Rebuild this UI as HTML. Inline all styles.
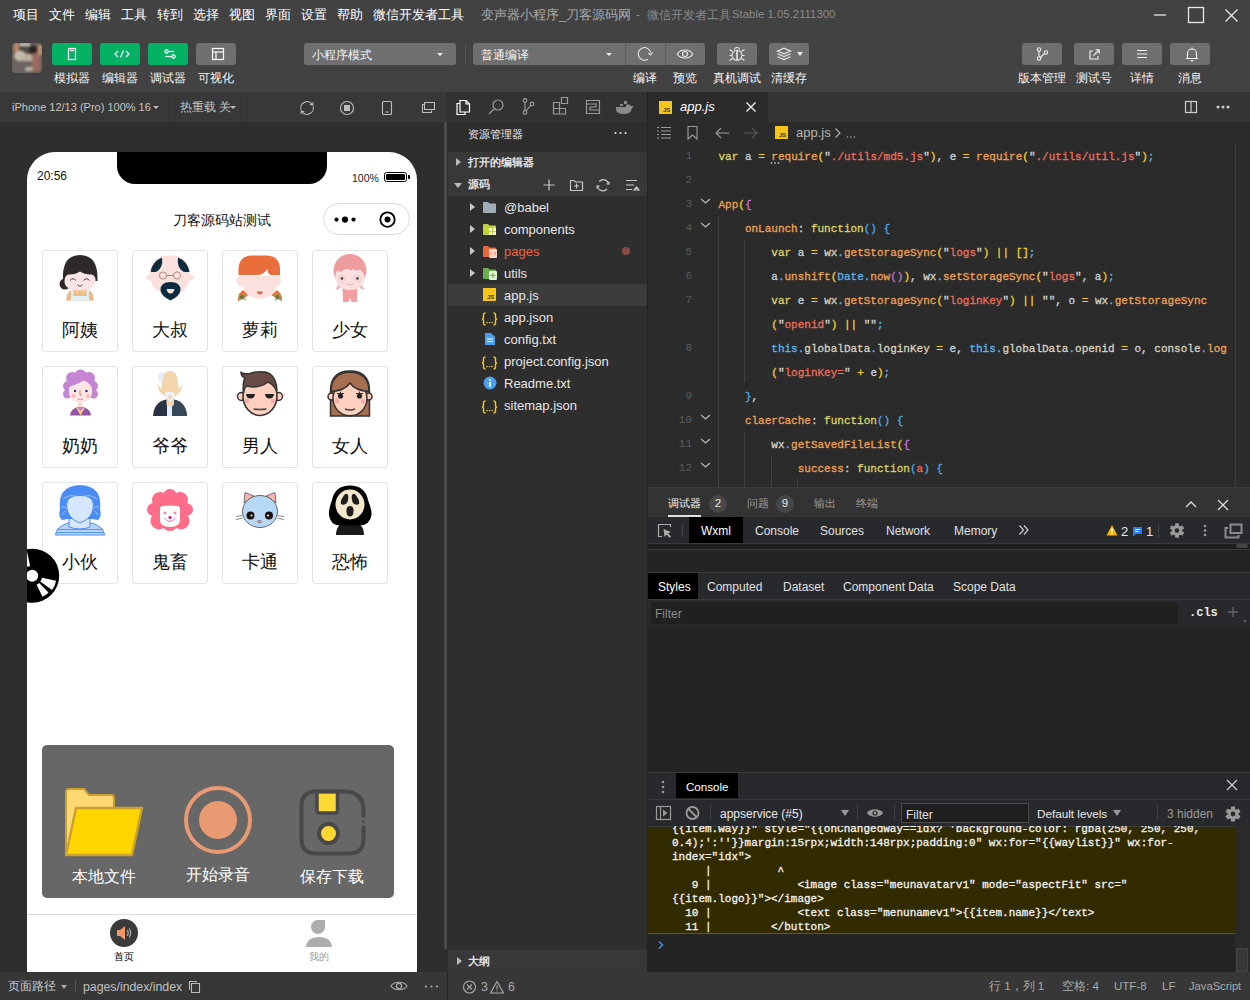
<!DOCTYPE html>
<html><head><meta charset="utf-8">
<style>
*{margin:0;padding:0;box-sizing:border-box}
html,body{width:1250px;height:1000px;overflow:hidden;background:#2e2e2e;font-family:"Liberation Sans",sans-serif;color:#ddd}
.a{position:absolute}
.t{position:absolute;white-space:nowrap;line-height:1}
.m{-webkit-text-stroke:0.3px currentColor}
</style></head><body>
<div class="a" style="left:0;top:0;width:1250px;height:1000px;overflow:hidden">

<!-- ===== top menu + toolbar ===== -->
<div class="a" id="top" style="left:0;top:0;width:1250px;height:92px;background:#424242">
  <div class="t" style="left:13px;top:8px;font-size:13px;color:#fff;font-weight:500">
    <span style="position:absolute;left:0">项目</span><span style="position:absolute;left:36px">文件</span><span style="position:absolute;left:72px">编辑</span><span style="position:absolute;left:108px">工具</span><span style="position:absolute;left:144px">转到</span><span style="position:absolute;left:180px">选择</span><span style="position:absolute;left:216px">视图</span><span style="position:absolute;left:252px">界面</span><span style="position:absolute;left:288px">设置</span><span style="position:absolute;left:324px">帮助</span><span style="position:absolute;left:360px">微信开发者工具</span>
  </div>
  <div class="t" style="left:481px;top:8px;font-size:13px;color:#a8a8a8">变声器小程序_刀客源码网</div><div class="t" style="left:636px;top:9px;font-size:12px;color:#8a8a8a">-&nbsp;&nbsp;微信开发者工具</div><div class="t" style="left:732px;top:9px;font-size:11.4px;color:#8a8a8a">Stable 1.05.2111300</div>

  <!-- avatar -->
  <svg class="a" style="left:12px;top:43px;border-radius:3px" width="30" height="30" viewBox="0 0 30 30">
    <defs><filter id="bl" x="-20%" y="-20%" width="140%" height="140%"><feGaussianBlur stdDeviation="1.3"/></filter><clipPath id="avc"><rect x="0" y="0" width="30" height="30" rx="3"/></clipPath></defs>
    <g clip-path="url(#avc)"><rect x="0" y="0" width="30" height="30" fill="#6a605a"/>
    <g filter="url(#bl)">
      <rect x="2" y="0" width="6" height="9" fill="#b88466"/>
      <rect x="7" y="1" width="14" height="10" fill="#4e4844"/>
      <rect x="8" y="0" width="10" height="3" fill="#c8c0b8"/>
      <rect x="17" y="3" width="8" height="10" fill="#2c2424"/>
      <ellipse cx="8" cy="13" rx="6" ry="5" fill="#c4bcac"/>
      <ellipse cx="16" cy="15" rx="7" ry="4" fill="#bcb2a2"/>
      <rect x="20" y="10" width="8" height="18" rx="3" fill="#9c6a5c"/>
      <rect x="0" y="18" width="20" height="12" fill="#6c6464"/>
      <ellipse cx="17" cy="26" rx="4" ry="2" fill="#b8b0a0"/>
      <rect x="26" y="2" width="4" height="10" fill="#c09070"/>
    </g></g>
  </svg>
  <!-- green buttons -->
  <div class="a" style="left:52px;top:43px;width:40px;height:22px;border-radius:3px;background:#05b164"></div>
  <div class="a" style="left:100px;top:43px;width:40px;height:22px;border-radius:3px;background:#05b164"></div>
  <div class="a" style="left:148px;top:43px;width:40px;height:22px;border-radius:3px;background:#05b164"></div>
  <div class="a" style="left:196px;top:43px;width:40px;height:22px;border-radius:3px;background:#707070"></div>
  <svg class="a" style="left:52px;top:43px" width="192" height="22" viewBox="0 0 192 22" fill="none" stroke="#fff" stroke-width="1.2">
    <rect x="16.5" y="5.5" width="7" height="11" />
    <line x1="18" y1="7.5" x2="22" y2="7.5"/>
    <path d="M66 8 L63 11 L66 14 M74 8 L77 11 L74 14 M71.5 7.5 L68.5 14.5"/>
    <circle cx="114.5" cy="8.5" r="1.6"/><line x1="116" y1="8.5" x2="122" y2="8.5"/>
    <circle cx="121.5" cy="13.5" r="1.6"/><line x1="113" y1="13.5" x2="120" y2="13.5"/>
    <rect x="160.5" y="5.5" width="11" height="11"/><line x1="160.5" y1="9" x2="171.5" y2="9"/><line x1="164" y1="9" x2="164" y2="16.5"/>
  </svg>
  <div class="t" style="left:54px;top:72px;font-size:12px;color:#f4f4f4;font-weight:500">模拟器</div>
  <div class="t" style="left:102px;top:72px;font-size:12px;color:#f4f4f4;font-weight:500">编辑器</div>
  <div class="t" style="left:150px;top:72px;font-size:12px;color:#f4f4f4;font-weight:500">调试器</div>
  <div class="t" style="left:198px;top:72px;font-size:12px;color:#f4f4f4;font-weight:500">可视化</div>
  <!-- dropdowns -->
  <div class="a" style="left:304px;top:43px;width:152px;height:22px;border-radius:3px;background:#6f6f6f"></div>
  <div class="t" style="left:312px;top:49px;font-size:12px;color:#f4f4f4;font-weight:500">小程序模式</div>
  <div class="a" style="left:437px;top:53px;width:0;height:0;border-left:3px solid transparent;border-right:3px solid transparent;border-top:3px solid #eee"></div>
  <div class="a" style="left:465px;top:43px;width:1px;height:22px;background:#555"></div>
  <div class="a" style="left:473px;top:43px;width:232px;height:22px;border-radius:3px;background:#6f6f6f"></div>
  <div class="a" style="left:625px;top:43px;width:1px;height:22px;background:#5a5a5a"></div>
  <div class="a" style="left:665px;top:43px;width:1px;height:22px;background:#5a5a5a"></div>
  <div class="t" style="left:481px;top:49px;font-size:12px;color:#f4f4f4;font-weight:500">普通编译</div>
  <div class="a" style="left:606px;top:53px;width:0;height:0;border-left:3px solid transparent;border-right:3px solid transparent;border-top:3px solid #eee"></div>
  <div class="a" style="left:717px;top:43px;width:40px;height:22px;border-radius:3px;background:#6f6f6f"></div>
  <div class="a" style="left:769px;top:43px;width:40px;height:22px;border-radius:3px;background:#6f6f6f"></div>
  <svg class="a" style="left:625px;top:43px" width="190" height="22" viewBox="0 0 190 22" fill="none" stroke="#e8e8e8" stroke-width="1.1">
    <path d="M25.6 9.5 A6.3 6.3 0 1 0 22.8 16.2"/><path d="M23.3 10 L25.7 12 L27.6 9.2"/>
    <path d="M52.2 11 C55.5 5.6 64.5 5.6 67.8 11 C64.5 16.4 55.5 16.4 52.2 11 Z"/><circle cx="60" cy="11" r="2.5"/>
    <path d="M109.5 6.5 A2.5 2 0 0 1 114.5 6.5"/><circle cx="112" cy="12.3" r="5"/><path d="M112 7.5 V17" stroke-width="1.6"/>
    <path d="M104.5 6.5 L107.5 8.5 M104.5 12.5 H107 M104.5 17.5 L107.5 15.5 M119.5 6.5 L116.5 8.5 M119.5 12.5 H117 M119.5 17.5 L116.5 15.5"/>
    <path d="M152.5 8 L159 5.2 L165.5 8 L159 10.8 Z" stroke-width="1.2"/><path d="M152.5 10.8 L159 13.6 L165.5 10.8 M152.5 13.8 L159 16.6 L165.5 13.8" stroke-width="1.2"/>
  </svg>
  <div class="a" style="left:797px;top:52px;width:0;height:0;border-left:3.5px solid transparent;border-right:3.5px solid transparent;border-top:4px solid #eee"></div>
  <div class="t" style="left:633px;top:72px;font-size:12px;color:#f4f4f4;font-weight:500">编译</div>
  <div class="t" style="left:673px;top:72px;font-size:12px;color:#f4f4f4;font-weight:500">预览</div>
  <div class="t" style="left:713px;top:72px;font-size:12px;color:#f4f4f4;font-weight:500">真机调试</div>
  <div class="t" style="left:771px;top:72px;font-size:12px;color:#f4f4f4;font-weight:500">清缓存</div>
  <!-- right buttons -->
  <div class="a" style="left:1022px;top:43px;width:40px;height:22px;border-radius:3px;background:#6f6f6f"></div>
  <div class="a" style="left:1074px;top:43px;width:40px;height:22px;border-radius:3px;background:#6f6f6f"></div>
  <div class="a" style="left:1122px;top:43px;width:40px;height:22px;border-radius:3px;background:#6f6f6f"></div>
  <div class="a" style="left:1170px;top:43px;width:40px;height:22px;border-radius:3px;background:#6f6f6f"></div>
  <svg class="a" style="left:1022px;top:43px" width="190" height="22" viewBox="0 0 190 22" fill="none" stroke="#f0f0f0" stroke-width="1.1">
    <circle cx="17" cy="6.5" r="1.7"/><circle cx="17" cy="15.5" r="1.7"/><circle cx="24" cy="9.5" r="1.7"/><path d="M17 8.2 V13.8 M18.5 14.5 L22.5 10.5"/>
    <path d="M71 8 H68 V16 H76 V13 M71.5 12.5 L77 7 M73.5 6.8 H77.2 V10.5"/>
    <path d="M115 7.5 H125 M115 11 H125 M115 14.5 H125"/>
    <path d="M164 15.5 H176 M165.5 15.5 V10.5 A4.5 4.5 0 0 1 174.5 10.5 V15.5 M170 4.5 V6 M169 17 a1 1 0 0 0 2 0"/>
  </svg>
  <div class="t" style="left:1018px;top:72px;font-size:12px;color:#f4f4f4;font-weight:500">版本管理</div>
  <div class="t" style="left:1076px;top:72px;font-size:12px;color:#f4f4f4;font-weight:500">测试号</div>
  <div class="t" style="left:1130px;top:72px;font-size:12px;color:#f4f4f4;font-weight:500">详情</div>
  <div class="t" style="left:1178px;top:72px;font-size:12px;color:#f4f4f4;font-weight:500">消息</div>
  <!-- window controls -->
  <svg class="a" style="left:1140px;top:0" width="110" height="30" viewBox="0 0 110 30" fill="none" stroke="#e8e8e8" stroke-width="1.3">
    <line x1="14" y1="15" x2="26" y2="15"/>
    <rect x="48.5" y="7.5" width="15" height="15"/>
    <path d="M85.5 9.5 L97.5 21.5 M97.5 9.5 L85.5 21.5"/>
  </svg>
</div>

<!-- ===== simulator panel ===== -->
<div class="a" id="sim" style="left:0;top:92px;width:447px;height:880px;background:#2e2e2e">

  <div class="a" style="left:0;top:0;width:447px;height:30px;background:#383838"></div>
  <div class="t" style="left:12px;top:10px;font-size:11px;color:#c8c4bc">iPhone 12/13 (Pro) 100% 16</div>
  <div class="a" style="left:153px;top:14px;width:0;height:0;border-left:3px solid transparent;border-right:3px solid transparent;border-top:3px solid #bbb"></div>
  <div class="a" style="left:168px;top:0;width:1px;height:30px;background:#333"></div>
  <div class="t" style="left:180px;top:10px;font-size:11.5px;color:#c4c4c4">热重载 关</div>
  <div class="a" style="left:230px;top:14px;width:0;height:0;border-left:3px solid transparent;border-right:3px solid transparent;border-top:3px solid #bbb"></div>
  <div class="a" style="left:247px;top:0;width:1px;height:30px;background:#333"></div>
  <svg class="a" style="left:290px;top:0" width="157" height="30" viewBox="0 0 157 30" fill="none" stroke="#bdbdbd" stroke-width="1.1">
    <path d="M23.09 14.37 A6.3 6.3 0 0 1 11.54 19.15 M10.91 17.63 A6.3 6.3 0 0 1 22.46 12.85"/><path d="M19.86 12.25 L22.76 13.15 L23.06 10.25 M14.14 19.75 L11.24 18.85 L10.94 21.75"/>
    <circle cx="57" cy="16" r="6.5"/><rect x="54" y="13" width="6" height="6" fill="#bdbdbd" stroke="none"/>
    <rect x="92.5" y="9.5" width="9" height="13" rx="1"/><line x1="95.5" y1="20" x2="98.5" y2="20"/>
    <path d="M134.5 12.5 H132.5 V20.5 H141.5 V18.5 M134.5 10.5 H144.5 V17.5 H134.5 Z"/>
  </svg>
  <!-- scrollbar -->
  <div class="a" style="left:444px;top:30px;width:3px;height:827px;background:#4a4a4a"></div>
</div>


<!-- ===== phone ===== -->
<div class="a" id="phone" style="left:27px;top:152px;width:390px;height:820px;background:#fff;border-radius:28px 28px 0 0;overflow:hidden">
  <div class="a" style="left:90px;top:0;width:210px;height:32px;background:#000;border-radius:0 0 18px 18px"></div>
  <div class="t" style="left:10px;top:18px;font-size:12px;color:#111">20:56</div>
  <div class="t" style="left:325px;top:21px;font-size:10.5px;color:#222">100%</div>
  <div class="a" style="left:357px;top:20px;width:23px;height:10px;border:1.3px solid #000;border-radius:2.5px;padding:1.3px"><div style="width:100%;height:100%;background:#000;border-radius:1px"></div></div>
  <div class="a" style="left:381px;top:23px;width:2px;height:4px;background:#000;border-radius:0 1px 1px 0"></div>
  <div class="t" style="left:0;top:62px;width:390px;text-align:center;font-size:13.5px;color:#111">刀客源码站测试</div>
  <div class="a" style="left:296px;top:51px;width:87px;height:32px;border:1px solid #dcdcdc;border-radius:16px"></div>
  <svg class="a" style="left:296px;top:51px" width="87" height="32" viewBox="0 0 87 32">
    <circle cx="13.5" cy="16.6" r="2.1" fill="#000"/><circle cx="22" cy="16.6" r="3.1" fill="#000"/><circle cx="30.5" cy="16.6" r="2.1" fill="#000"/>
    <circle cx="64.5" cy="16.6" r="7.2" fill="none" stroke="#000" stroke-width="1.8"/><circle cx="64.5" cy="16.6" r="3" fill="#000"/>
  </svg>
<div class="a" style="left:15px;top:98px;width:76px;height:102px;border:1px solid #e3e3e3;border-radius:3px;background:#fff"></div>
<svg class="a" style="left:28px;top:101px;overflow:visible" width="50" height="50" viewBox="0 0 50 50"><path d="M8 28 Q6.5 2 25 2 Q43.5 2 42.5 28 Z" fill="#2e2a2b"/><circle cx="10" cy="31" r="5.5" fill="#2e2a2b"/>
<path d="M11 47.5 Q12 37 18 36.5 H32 Q38 37 39 47.5Z" fill="#f0b98a"/><path d="M16 47.5 V37 H18.5 V43 H31.5 V37 H34 V47.5Z" fill="#dff0f5"/><path d="M19 38 L22 41 L25 38 L28 41 L31 38Z" fill="#f3d080"/>
<path d="M9.5 28.5 Q9.5 23 13 21.5 Q20 22 25 18.5 Q30 22 37 21.5 Q41 23 40.5 28.5 Q40 37.5 25 37.5 Q10 37.5 9.5 28.5Z" fill="#fae4e6"/>
<path d="M15 27.5 Q18 24 21 27.5 M28.5 27.5 Q31.5 24 34.5 27.5 M22.5 31.5 Q25 35 27.5 31.5" stroke="#333" stroke-width="0.9" fill="none"/></svg>
<div class="t" style="left:15px;top:169px;width:76px;text-align:center;font-size:18px;color:#111">阿姨</div>
<div class="a" style="left:105px;top:98px;width:76px;height:102px;border:1px solid #e3e3e3;border-radius:3px;background:#fff"></div>
<svg class="a" style="left:118px;top:101px;overflow:visible" width="50" height="50" viewBox="0 0 50 50"><path d="M5 22 Q5 2.5 25 2.5 Q45 2.5 45 22 Q45 32 38 38 L25.5 46 L13 38 Q5 32 5 22Z" fill="#fbe1dd"/><ellipse cx="25" cy="24.5" rx="24.5" ry="5.5" fill="#fbe1dd"/>
<path d="M5.5 18.5 Q8 8 17 4.5 Q18.5 14 12 18.5 Q8 19.5 5.5 18.5Z" fill="#0d2b3e"/><path d="M44.5 18.5 Q42 8 33 4.5 Q31.5 14 38 18.5 Q42 19.5 44.5 18.5Z" fill="#0d2b3e"/>
<circle cx="18" cy="22.5" r="3.6" fill="none" stroke="#8a6a5a" stroke-width=".7"/><circle cx="32" cy="22.5" r="3.6" fill="none" stroke="#8a6a5a" stroke-width=".7"/><path d="M21.6 22.5 H28.4" stroke="#8a6a5a" stroke-width=".8"/>
<path d="M15.5 37 Q15.5 29 25.5 29 Q35.5 29 35.5 37 Q35 43 25.5 47.5 Q16 43 15.5 37Z" fill="#0d2b3e"/><path d="M21.5 36 H29.5 Q28.5 40.5 25.5 40.5 Q22.5 40.5 21.5 36Z" fill="#fbe1dd"/></svg>
<div class="t" style="left:105px;top:169px;width:76px;text-align:center;font-size:18px;color:#111">大叔</div>
<div class="a" style="left:195px;top:98px;width:76px;height:102px;border:1px solid #e3e3e3;border-radius:3px;background:#fff"></div>
<svg class="a" style="left:208px;top:101px;overflow:visible" width="50" height="50" viewBox="0 0 50 50"><path d="M8 37 Q2 42 3 48 Q9 46 13.5 42Z" fill="#e96e3c"/><path d="M42 37 Q48 42 47 48 Q41 46 36.5 42Z" fill="#e96e3c"/>
<path d="M3.5 41 l7 6 M10 40.5 l-6 6.5 M39.5 40.5 l7 6 M46 41 l-6 6.5" stroke="#94b060" stroke-width="1.6"/><circle cx="7" cy="44" r="2" fill="#5f7a38"/><circle cx="42.5" cy="44" r="2" fill="#5f7a38"/>
<path d="M1.5 28 Q1.5 23 7 23 H41 Q46 23 46 28 Q46 33 41 34 Q38 45.5 24.5 45.5 Q11 45.5 8 34 Q1.5 33 1.5 28Z" fill="#fbe1dd"/>
<path d="M3.5 22 V17 Q3.5 2.5 17 2.5 H31 Q45 2.5 45 17 V22 H35.5 Q32.5 20.5 32.5 16 Q29 21.5 23 22Z" fill="#e96e3c"/><path d="M21.5 38.5 H28 Q27 41.5 24.8 41.5 Q22.5 41.5 21.5 38.5Z" fill="#e0604a"/></svg>
<div class="t" style="left:195px;top:169px;width:76px;text-align:center;font-size:18px;color:#111">萝莉</div>
<div class="a" style="left:285px;top:98px;width:76px;height:102px;border:1px solid #e3e3e3;border-radius:3px;background:#fff"></div>
<svg class="a" style="left:298px;top:101px;overflow:visible" width="50" height="50" viewBox="0 0 50 50"><path d="M17.5 35 H32.5 L32 49 H26.5 L25 45 L23.5 49 H18Z" fill="#f0a0a2"/><path d="M10.5 36.5 L14 30 L16.5 35Z M39.5 36.5 L36 30 L33.5 35Z" fill="#f3b4b6"/>
<circle cx="25" cy="17.5" r="16.5" fill="#ee9c9e"/>
<path d="M10.5 22 Q11 16 16 19 Q20 14 27 17.5 L27.5 15.5 Q33 19 35 16 Q38 19 39.5 22 Q40 37 25 37 Q10 37 10.5 22Z" fill="#fbdfe0"/>
<circle cx="17" cy="25.5" r="3.4" fill="none" stroke="#f4b8b8" stroke-width=".7"/><circle cx="32.5" cy="25.5" r="3.4" fill="none" stroke="#f4b8b8" stroke-width=".7"/>
<circle cx="17" cy="25.5" r="1.4" fill="#555"/><circle cx="32.5" cy="25.5" r="1.4" fill="#555"/><path d="M21.5 31 q3.5 2 7 0" stroke="#e49a9a" stroke-width=".7" fill="none"/></svg>
<div class="t" style="left:285px;top:169px;width:76px;text-align:center;font-size:18px;color:#111">少女</div>
<div class="a" style="left:15px;top:214px;width:76px;height:102px;border:1px solid #e3e3e3;border-radius:3px;background:#fff"></div>
<svg class="a" style="left:28px;top:217px;overflow:visible" width="50" height="50" viewBox="0 0 50 50"><path d="M15 46.5 Q16 38 25.5 38 Q35 38 36 46.5Z" fill="#8e55a8"/><path d="M21 38.5 L25.5 46.5 L30 38.5Z" fill="#f5d070"/><path d="M21.5 38 L25.5 42 L29.5 38Z" fill="#c685d2"/>
<rect x="23" y="32" width="4.5" height="6" fill="#fcd8d0"/>
<circle cx="17" cy="9" r="6" fill="#c685d2"/><circle cx="25.5" cy="7" r="6.5" fill="#c685d2"/><circle cx="34" cy="9" r="6" fill="#c685d2"/><circle cx="13" cy="17" r="5" fill="#c685d2"/><circle cx="38" cy="17" r="5" fill="#c685d2"/><circle cx="12.5" cy="25" r="4.5" fill="#c685d2"/><circle cx="38.5" cy="25" r="4.5" fill="#c685d2"/>
<path d="M14 20 Q14 15 20 13.5 L29 11.5 Q37 14 37 20 Q38 33 25.5 34 Q13 33 14 20Z" fill="#fde6e3"/><path d="M14 18 Q20 16 29 11.5 Q24 6 15 12Z" fill="#c685d2"/><path d="M29 11.5 Q34 13 38 20 L38 12 Q34 7 29 11.5Z" fill="#c685d2"/>
<circle cx="20" cy="22" r="1.2" fill="#2a2a70"/><circle cx="31.5" cy="22" r="1.2" fill="#2a2a70"/><circle cx="18.5" cy="27" r="2" fill="#f8b8c0"/><circle cx="33" cy="27" r="2" fill="#f8b8c0"/><path d="M25 21 V26 H26.5 M23 30 q2.5 1.2 5 0" stroke="#e06070" stroke-width=".8" fill="none"/></svg>
<div class="t" style="left:15px;top:285px;width:76px;text-align:center;font-size:18px;color:#111">奶奶</div>
<div class="a" style="left:105px;top:214px;width:76px;height:102px;border:1px solid #e3e3e3;border-radius:3px;background:#fff"></div>
<svg class="a" style="left:118px;top:217px;overflow:visible" width="50" height="50" viewBox="0 0 50 50"><path d="M8 47 Q9 31 25 30 Q41 31 42 47Z" fill="#2a3345"/><path d="M25 30 Q41 31 42 47 H27Z" fill="#37475a"/><rect x="22" y="35" width="5" height="12" fill="#e4eefc"/>
<rect x="21.5" y="28" width="7.5" height="9" rx="2" fill="#f8d8b0"/>
<path d="M12 13 Q13 17 17 20 Q16 2 25 2 Q34 2 33 20 Q37 17 37.5 13 Q37 22 33 25 Q30 28 25 29 Q20 28 17 25 Q13 22 12 13Z" fill="#f4d4ac"/>
<path d="M13 5 Q17 2.5 20 3 Q17 8 16 15 Q13 12 13 5Z" fill="#e4eefc"/>
<path d="M20 24 Q25 21 29.5 24 Q30 30 25 32.5 Q20 30 20 24Z" fill="#eef2fa"/><path d="M22.5 27 Q25 25 27.5 27 L25 31Z" fill="#f4d4ac"/></svg>
<div class="t" style="left:105px;top:285px;width:76px;text-align:center;font-size:18px;color:#111">爷爷</div>
<div class="a" style="left:195px;top:214px;width:76px;height:102px;border:1px solid #e3e3e3;border-radius:3px;background:#fff"></div>
<svg class="a" style="left:208px;top:217px;overflow:visible" width="50" height="50" viewBox="0 0 50 50"><circle cx="6.5" cy="27.5" r="4" fill="#fdd0c0" stroke="#333" stroke-width="1.5"/><circle cx="43.5" cy="27.5" r="4" fill="#fdd0c0" stroke="#333" stroke-width="1.5"/>
<ellipse cx="25" cy="27" rx="17" ry="19.5" fill="#fdd0c0" stroke="#333" stroke-width="1.6"/>
<path d="M8.5 24 Q7.5 13 10 9 Q6 7 6 3.5 Q10 5.5 15 4.5 Q22 2 30 3 Q41 5 42 22 Q38 15 33 13 Q24 20 12 17 Q9 19 8.5 24Z" fill="#6a4a44" stroke="#333" stroke-width="1.5"/>
<path d="M11 25 H20 Q19.5 29.5 15.5 29.5 Q11.5 29.5 11 25Z M30 25 H39 Q38.5 29.5 34.5 29.5 Q30.5 29.5 30 25Z" fill="#222"/>
<path d="M18.5 40 Q25 41 31.5 40" stroke="#444" stroke-width="1.6" fill="none"/><circle cx="12" cy="32" r="2.2" fill="#fba8a8"/><circle cx="38" cy="32" r="2.2" fill="#fba8a8"/></svg>
<div class="t" style="left:195px;top:285px;width:76px;text-align:center;font-size:18px;color:#111">男人</div>
<div class="a" style="left:285px;top:214px;width:76px;height:102px;border:1px solid #e3e3e3;border-radius:3px;background:#fff"></div>
<svg class="a" style="left:298px;top:217px;overflow:visible" width="50" height="50" viewBox="0 0 50 50"><path d="M5.5 47 V22 Q5.5 2 25 2 Q44.5 2 44.5 22 V47Z" fill="#a86e50" stroke="#333" stroke-width="1.5"/>
<circle cx="6.5" cy="27.5" r="3.5" fill="#fdd0c0" stroke="#333" stroke-width="1.5"/><circle cx="43.5" cy="27.5" r="3.5" fill="#fdd0c0" stroke="#333" stroke-width="1.5"/>
<ellipse cx="25" cy="29.5" rx="17" ry="17.3" fill="#fdd0c0" stroke="#333" stroke-width="1.5"/>
<path d="M6 22.5 Q20 21.5 25 14 Q30 21.5 44 22.5 Q44 4 25 3 Q6 4 6 22.5Z" fill="#a86e50" stroke="#333" stroke-width="1.5"/>
<circle cx="15.5" cy="27" r="2.6" fill="#222"/><circle cx="34.5" cy="27" r="2.6" fill="#222"/><path d="M12 24.5 h7 M15.5 24.5 v-2 M31 24.5 h7 M34.5 24.5 v-2" stroke="#222" stroke-width=".9"/>
<path d="M20 40 Q25 42 30 40" stroke="#444" stroke-width="1.6" fill="none"/><circle cx="12" cy="32" r="2.2" fill="#fba8a8"/><circle cx="38" cy="32" r="2.2" fill="#fba8a8"/></svg>
<div class="t" style="left:285px;top:285px;width:76px;text-align:center;font-size:18px;color:#111">女人</div>
<div class="a" style="left:15px;top:330px;width:76px;height:102px;border:1px solid #e3e3e3;border-radius:3px;background:#fff"></div>
<svg class="a" style="left:28px;top:333px;overflow:visible" width="50" height="50" viewBox="0 0 50 50"><path d="M0.5 50 Q1 42 13 38 Q25 44 37 38 Q49 42 49.5 50Z" fill="#b8d4fb" stroke="#4a8ef5" stroke-width="1"/><path d="M2 44.5 H48 M1 47.5 H49" stroke="#4a8ef5" stroke-width=".9"/>
<path d="M14 32 V42 Q25 46 35 42 V32Z" fill="#d6e6fd" stroke="#4a8ef5" stroke-width="1"/>
<path d="M5 24 Q3 6 15 2 Q25 -2 35 2 Q47 6 45 24 Q47 32 43 35 L37 34 L13 34 L7 35 Q3 32 5 24Z" fill="#4a8ef5"/>
<path d="M8 14 Q15 8 25 12 Q35 8 42 14 M6 22 Q9 20 12 24 M44 22 Q41 20 38 24 M7 30 L10 26 M43 30 L40 26" stroke="#a8c8fa" stroke-width=".8" fill="none"/>
<path d="M11.5 20 Q12 10 25 10.5 Q38 10 38.5 20 Q38.5 33 25 38 Q11.5 33 11.5 20Z" fill="#d6e6fd" stroke="#4a8ef5" stroke-width="1"/></svg>
<div class="t" style="left:15px;top:401px;width:76px;text-align:center;font-size:18px;color:#111">小伙</div>
<div class="a" style="left:105px;top:330px;width:76px;height:102px;border:1px solid #e3e3e3;border-radius:3px;background:#fff"></div>
<svg class="a" style="left:118px;top:333px;overflow:visible" width="50" height="50" viewBox="0 0 50 50"><g fill="#fd6d8a"><circle cx="25" cy="11" r="7"/><circle cx="15" cy="15" r="8"/><circle cx="35" cy="15" r="8"/><circle cx="8.5" cy="24.5" r="6.5"/><circle cx="41.5" cy="24.5" r="6.5"/><circle cx="14" cy="36" r="8.5"/><circle cx="36" cy="36" r="8.5"/><circle cx="25" cy="27" r="16"/><circle cx="25" cy="38" r="8"/></g>
<path d="M15 24 Q15 21 18 21 Q25 20 32 21 Q35 21 35 24 V35 Q35 42 25 42 Q15 42 15 35Z" fill="#fff"/>
<path d="M20 26 L20.8 27.5 L22.3 28 L20.8 28.5 L20 30 L19.2 28.5 L17.7 28 L19.2 27.5Z M30 26 L30.8 27.5 L32.3 28 L30.8 28.5 L30 30 L29.2 28.5 L27.7 28 L29.2 27.5Z" fill="#fd6d8a"/>
<circle cx="25" cy="32.5" r="1.6" fill="#e0106a"/><path d="M19.5 33 Q25 40 30.5 33" stroke="#e070c0" stroke-width="1" fill="none"/></svg>
<div class="t" style="left:105px;top:401px;width:76px;text-align:center;font-size:18px;color:#111">鬼畜</div>
<div class="a" style="left:195px;top:330px;width:76px;height:102px;border:1px solid #e3e3e3;border-radius:3px;background:#fff"></div>
<svg class="a" style="left:208px;top:333px;overflow:visible" width="50" height="50" viewBox="0 0 50 50"><path d="M9 18 L10 7.5 L19 11Z M41 18 L40 7.5 L31 11Z" fill="#f7b3b0" stroke="#555" stroke-width=".8"/>
<ellipse cx="25" cy="26.5" rx="17.5" ry="16" fill="#b8d8f8" stroke="#555" stroke-width=".9"/>
<circle cx="15.5" cy="30.5" r="4" fill="#1a1010"/><circle cx="34" cy="30.5" r="4" fill="#1a1010"/><circle cx="16.5" cy="30.5" r="1" fill="#fff"/><circle cx="33" cy="30.5" r="1" fill="#fff"/>
<ellipse cx="24.5" cy="36.5" rx="2" ry="1.3" fill="#e88a98" stroke="#555" stroke-width=".5"/>
<path d="M1 31.5 L7.5 30.5 M1 34.5 L7.5 33 M49 31.5 L42.5 30.5 M49 34.5 L42.5 33" stroke="#666" stroke-width=".8"/></svg>
<div class="t" style="left:195px;top:401px;width:76px;text-align:center;font-size:18px;color:#111">卡通</div>
<div class="a" style="left:285px;top:330px;width:76px;height:102px;border:1px solid #e3e3e3;border-radius:3px;background:#fff"></div>
<svg class="a" style="left:298px;top:333px;overflow:visible" width="50" height="50" viewBox="0 0 50 50"><path d="M11 50 Q11 37 25 37 Q39 37 39 50Z" fill="#1a1a1a"/>
<path d="M25 0.5 Q40 0.5 43 15 Q47 25 46.5 30 Q45 40 35 40.5 H15 Q5 40 4 30 Q3.5 24 7 15 Q10 0.5 25 0.5Z" fill="#000"/>
<ellipse cx="25" cy="19.5" rx="14.5" ry="15" fill="#f4e8cc"/>
<path d="M23 10 Q21 7 18.5 11 Q15 16 16 19 Q19 21 22 18 Q24 14 23 10Z M27 10 Q29 7 31.5 11 Q35 16 34 19 Q31 21 28 18 Q26 14 27 10Z M25 21 Q29 21 28.5 27 Q28 31.5 25 31.5 Q22 31.5 21.5 27 Q21 21 25 21Z" fill="#1e1e1e"/></svg>
<div class="t" style="left:285px;top:401px;width:76px;text-align:center;font-size:18px;color:#111">恐怖</div>
  <!-- floating disc -->
  <svg class="a" style="left:-27px;top:396px" width="90" height="60" viewBox="0 0 90 60">
    <circle cx="32.2" cy="27.700000000000045" r="27" fill="#000"/>
    <circle cx="32.2" cy="27.700000000000045" r="6" fill="#fff"/>
    <path d="M56.16 32.79 A24.5 24.5 0 0 1 52.02 42.10 L40.29 33.58 A10 10 0 0 0 41.98 29.78Z M48.52 44.60 A23.5 23.5 0 0 1 42.50 48.82 L36.58 36.69 A10 10 0 0 0 39.15 34.89Z M20.93 6.51 A24 24 0 0 1 27.21 4.22 L30.12 17.92 A10 10 0 0 0 27.51 18.87Z" fill="#fff"/>
  </svg>
  <!-- gray action panel -->
  <div class="a" style="left:15px;top:593px;width:352px;height:153px;background:#676767;border-radius:5px"></div>
  <svg class="a" style="left:15px;top:593px" width="352" height="153" viewBox="0 0 352 153">
    <path d="M24 68 V47 Q24 44 27 44 H42 L47 50 H69 Q72 50 72 53 V110 H24Z" fill="#fed872" stroke="#caa030" stroke-width="2"/>
    <path d="M34 63 H100 L90 110 H24Z" fill="#ffd600" stroke="#caa030" stroke-width="2.4" stroke-linejoin="round"/>
    <circle cx="176" cy="75" r="32" fill="none" stroke="#e89a72" stroke-width="4"/>
    <circle cx="176" cy="75" r="19" fill="#e89a72"/>
    <path d="M275 46.5 V65.5 Q275 68 277.5 68 H293 Q295.5 68 295.5 65.5 V46.5Z" fill="#fed832" stroke="#48484a" stroke-width="3.5"/>
    <path d="M321.5 71 V66 Q321.5 46.5 302 46.5 H274 Q259.5 46.5 259.5 61 V94 Q259.5 108.5 274 108.5 H307 Q321.5 108.5 321.5 94 V82.5" fill="none" stroke="#48484a" stroke-width="4" stroke-linecap="round"/>
    <circle cx="321.5" cy="76.5" r="1.6" fill="#48484a"/>
    <circle cx="286.5" cy="88.5" r="9.5" fill="#fed832" stroke="#48484a" stroke-width="4"/>
  </svg>
  <div class="t" style="left:45px;top:717px;font-size:16px;color:#fff">本地文件</div>
  <div class="t" style="left:159px;top:715px;font-size:16px;color:#fff">开始录音</div>
  <div class="t" style="left:273px;top:717px;font-size:16px;color:#fff">保存下载</div>
  <!-- tab bar -->
  <div class="a" style="left:0;top:762px;width:390px;height:1px;background:#dcdcdc"></div>
  <svg class="a" style="left:82px;top:766px" width="30" height="30" viewBox="0 0 30 30">
    <circle cx="15" cy="15" r="14" fill="#3a3a3a"/>
    <path d="M8 12 H11 L16 8 V22 L11 18 H8Z" fill="#f0946a"/>
    <path d="M18.5 12 Q20 15 18.5 18 M20.5 10.5 Q23 15 20.5 19.5" stroke="#ccc" stroke-width="1" fill="none"/>
  </svg>
  <div class="t" style="left:87px;top:800px;font-size:10px;color:#000">首页</div>
  <svg class="a" style="left:278px;top:766px" width="28" height="30" viewBox="0 0 28 30">
    <path d="M14 2 H20 V9 A7 7 0 1 1 14 2Z" fill="#adadad"/>
    <path d="M1 29 Q2 19 14 19 Q26 19 27 29Z" fill="#adadad"/>
  </svg>
  <div class="t" style="left:282px;top:800px;font-size:10px;color:#999">我的</div>
</div>

<!-- ===== explorer ===== -->
<div class="a" id="exp" style="left:448px;top:92px;width:200px;height:880px;background:#2e2e2e">
  <div class="a" style="left:0;top:0;width:199px;height:30px;background:#323232"></div>
  <svg class="a" style="left:0;top:0" width="200" height="30" viewBox="0 0 200 30" fill="none" stroke="#9a9a9a" stroke-width="1.2">
    <path d="M11.5 11.5 H9 V22.5 H17 V20" stroke="#fff"/><path d="M12 8.5 H18 L21.5 12 V20 H12Z" stroke="#fff"/><path d="M18 8.5 V12 H21.5" stroke="#fff"/>
    <circle cx="50" cy="13" r="5"/><path d="M46.5 16.5 L41 22"/>
    <circle cx="77" cy="8.5" r="1.8"/><circle cx="77" cy="20.5" r="1.8"/><circle cx="84" cy="12" r="1.8"/><path d="M77 10.3 V18.7 M82.6 13.3 L78.2 18.8"/>
    <path d="M105.5 14.5 H111.5 V20.5 H105.5Z M105.5 20.5 H111.5 V26 M111.5 20.5 H117.5 V26 H105.5 V20.5 M113.5 9.5 H119.5 V15.5 H113.5Z" transform="translate(0,-4)"/>
    <path d="M138.5 8.5 H151.5 V21.5 H138.5Z M138.5 12 H148 V15 H142 V18 H151.5" />
    <path d="M168 17 Q168 22 176 22 Q183 22 184 16 L186 14 L183 14 Q181 11 178 13 V15 H168Z M172 12 H175 V14 H172Z M176 9 H179 V12 H176Z" fill="#8a8a8a" stroke="none"/>
  </svg>
  <div class="t" style="left:20px;top:37px;font-size:11px;color:#e8e8e8;font-weight:500">资源管理器</div>
  <svg class="a" style="left:164px;top:36px" width="20" height="10" viewBox="0 0 20 10" fill="#e0e0e0"><circle cx="3.5" cy="5" r="1.1"/><circle cx="8.5" cy="5" r="1.1"/><circle cx="13.5" cy="5" r="1.1"/></svg>
  <div class="a" style="left:0;top:60px;width:199px;height:44px;background:#383838"></div>
  <div class="a" style="left:8px;top:66px;width:0;height:0;border-top:4px solid transparent;border-bottom:4px solid transparent;border-left:5px solid #bbb"></div>
  <div class="t" style="left:20px;top:65px;font-size:11px;color:#e0e0e0;font-weight:bold">打开的编辑器</div>
  <div class="a" style="left:6px;top:91px;width:0;height:0;border-left:4px solid transparent;border-right:4px solid transparent;border-top:5px solid #bbb"></div>
  <div class="t" style="left:20px;top:87px;font-size:11px;color:#e0e0e0;font-weight:bold">源码</div>
  <svg class="a" style="left:90px;top:82px" width="110" height="22" viewBox="0 0 110 22" fill="none" stroke="#c8c8c8" stroke-width="1.2">
    <path d="M11 5.5 V16.5 M5.5 11 H16.5"/>
    <path d="M32.5 6.5 H36 L37.5 8 H44.5 V16.5 H32.5Z M38.5 9.5 V14.5 M36 12 H41"/>
    <path d="M61.2 7.5 A5.5 5.5 0 0 1 70.5 9.5 M69 15 A5.5 5.5 0 0 1 59.5 12.5"/><path d="M68.5 9.8 L70.8 10 L71.2 7.6 M61.5 12.2 L59.2 12 L58.8 14.4"/>
    <path d="M88 6.5 H99 M88 11 H96 M88 15.5 H94 M96 16 L98.5 13 L101 16Z"/>
  </svg>
<div class="a" style="left:22px;top:111px;width:0;height:0;border-top:4px solid transparent;border-bottom:4px solid transparent;border-left:5px solid #c8c8c8"></div>
<svg class="a" style="left:34px;top:108px" width="16" height="15" viewBox="0 0 16 15"><path d="M1 3 Q1 2 2 2 H6 L7.5 3.5 H13 Q14 3.5 14 4.5 V12 Q14 13 13 13 H2 Q1 13 1 12Z" fill="#a0adb8"/></svg>
<div class="t" style="left:56px;top:109px;font-size:13px;color:#e6e6e6">@babel</div>
<div class="a" style="left:22px;top:133px;width:0;height:0;border-top:4px solid transparent;border-bottom:4px solid transparent;border-left:5px solid #c8c8c8"></div>
<svg class="a" style="left:34px;top:130px" width="16" height="15" viewBox="0 0 16 15"><path d="M1 3 Q1 2 2 2 H6 L7.5 3.5 H13 Q14 3.5 14 4.5 V12 Q14 13 13 13 H2 Q1 13 1 12Z" fill="#c0d43a"/><rect x="7" y="6" width="3" height="3" fill="#fff" opacity=".8"/><rect x="11" y="6" width="3" height="3" fill="#fff" opacity=".8"/><rect x="7" y="10" width="3" height="3" fill="#fff" opacity=".8"/><rect x="11" y="10" width="3" height="3" fill="#fff" opacity=".8"/></svg>
<div class="t" style="left:56px;top:131px;font-size:13px;color:#e6e6e6">components</div>
<div class="a" style="left:22px;top:155px;width:0;height:0;border-top:4px solid transparent;border-bottom:4px solid transparent;border-left:5px solid #c8c8c8"></div>
<svg class="a" style="left:34px;top:152px" width="16" height="15" viewBox="0 0 16 15"><path d="M1 3 Q1 2 2 2 H6 L7.5 3.5 H13 Q14 3.5 14 4.5 V12 Q14 13 13 13 H2 Q1 13 1 12Z" fill="#f0643c"/><rect x="7" y="5" width="8" height="9" rx="1" fill="#ffd8c8"/><path d="M9.5 8 L8.5 9.5 L9.5 11 M12.5 8 L13.5 9.5 L12.5 11" stroke="#f0643c" stroke-width=".8" fill="none"/></svg>
<div class="t" style="left:56px;top:153px;font-size:13px;color:#f0643c">pages</div>
<div class="a" style="left:174px;top:155px;width:8px;height:8px;border-radius:50%;background:#8a4a48"></div>
<div class="a" style="left:22px;top:177px;width:0;height:0;border-top:4px solid transparent;border-bottom:4px solid transparent;border-left:5px solid #c8c8c8"></div>
<svg class="a" style="left:34px;top:174px" width="16" height="15" viewBox="0 0 16 15"><path d="M1 3 Q1 2 2 2 H6 L7.5 3.5 H13 Q14 3.5 14 4.5 V12 Q14 13 13 13 H2 Q1 13 1 12Z" fill="#6ab04c"/><rect x="7" y="5" width="8" height="9" rx="1" fill="#e0f2d8"/><path d="M11 7 V12 M8.5 9.5 H13.5" stroke="#6ab04c" stroke-width="1.2"/></svg>
<div class="t" style="left:56px;top:175px;font-size:13px;color:#e6e6e6">utils</div>
<div class="a" style="left:0;top:192px;width:199px;height:22px;background:#3c3c3c"></div>
<div class="a" style="left:35px;top:196px;width:13px;height:13px;background:#f5c518"></div><div class="t" style="left:39px;top:202px;font-size:6px;font-weight:bold;color:#333">JS</div>
<div class="t" style="left:56px;top:197px;font-size:13px;color:#e6e6e6">app.js</div>
<svg class="a" style="left:33px;top:219px" width="17" height="16" viewBox="0 0 17 16" fill="none" stroke="#f5c518" stroke-width="1.4"><path d="M4.5 2 Q2.5 2 2.5 4 V6.5 Q2.5 8 1 8 Q2.5 8 2.5 9.5 V12 Q2.5 14 4.5 14 M12.5 2 Q14.5 2 14.5 4 V6.5 Q14.5 8 16 8 Q14.5 8 14.5 9.5 V12 Q14.5 14 12.5 14"/><circle cx="6" cy="11.5" r=".8" fill="#f5c518" stroke="none"/><circle cx="8.5" cy="11.5" r=".8" fill="#f5c518" stroke="none"/><circle cx="11" cy="11.5" r=".8" fill="#f5c518" stroke="none"/></svg>
<div class="t" style="left:56px;top:219px;font-size:13px;color:#e6e6e6">app.json</div>
<svg class="a" style="left:36px;top:240px" width="12" height="14" viewBox="0 0 12 14"><path d="M1 1 H7 L11 5 V13 H1Z" fill="#4a9ff0"/><path d="M3 7 H9 M3 9.5 H9" stroke="#fff" stroke-width="1"/></svg>
<div class="t" style="left:56px;top:241px;font-size:13px;color:#e6e6e6">config.txt</div>
<svg class="a" style="left:33px;top:263px" width="17" height="16" viewBox="0 0 17 16" fill="none" stroke="#f5c518" stroke-width="1.4"><path d="M4.5 2 Q2.5 2 2.5 4 V6.5 Q2.5 8 1 8 Q2.5 8 2.5 9.5 V12 Q2.5 14 4.5 14 M12.5 2 Q14.5 2 14.5 4 V6.5 Q14.5 8 16 8 Q14.5 8 14.5 9.5 V12 Q14.5 14 12.5 14"/><circle cx="6" cy="11.5" r=".8" fill="#f5c518" stroke="none"/><circle cx="8.5" cy="11.5" r=".8" fill="#f5c518" stroke="none"/><circle cx="11" cy="11.5" r=".8" fill="#f5c518" stroke="none"/></svg>
<div class="t" style="left:56px;top:263px;font-size:13px;color:#e6e6e6">project.config.json</div>
<svg class="a" style="left:35px;top:284px" width="14" height="14" viewBox="0 0 14 14"><circle cx="7" cy="7" r="6.5" fill="#4a9ff0"/><rect x="6.2" y="6" width="1.6" height="5" fill="#fff"/><circle cx="7" cy="4" r="1" fill="#fff"/></svg>
<div class="t" style="left:56px;top:285px;font-size:13px;color:#e6e6e6">Readme.txt</div>
<svg class="a" style="left:33px;top:307px" width="17" height="16" viewBox="0 0 17 16" fill="none" stroke="#f5c518" stroke-width="1.4"><path d="M4.5 2 Q2.5 2 2.5 4 V6.5 Q2.5 8 1 8 Q2.5 8 2.5 9.5 V12 Q2.5 14 4.5 14 M12.5 2 Q14.5 2 14.5 4 V6.5 Q14.5 8 16 8 Q14.5 8 14.5 9.5 V12 Q14.5 14 12.5 14"/><circle cx="6" cy="11.5" r=".8" fill="#f5c518" stroke="none"/><circle cx="8.5" cy="11.5" r=".8" fill="#f5c518" stroke="none"/><circle cx="11" cy="11.5" r=".8" fill="#f5c518" stroke="none"/></svg>
<div class="t" style="left:56px;top:307px;font-size:13px;color:#e6e6e6">sitemap.json</div>
  <!-- outline -->
  <div class="a" style="left:0;top:858px;width:199px;height:22px;background:#383838"></div>
  <div class="a" style="left:9px;top:865px;width:0;height:0;border-top:4px solid transparent;border-bottom:4px solid transparent;border-left:5px solid #bbb"></div>
  <div class="t" style="left:20px;top:864px;font-size:11px;color:#e0e0e0;font-weight:bold">大纲</div>
  <div class="a" style="left:199px;top:0;width:1px;height:880px;background:#222"></div>
</div>

<!-- ===== editor ===== -->
<div class="a" id="ed" style="left:648px;top:92px;width:602px;height:395px;background:#2b2b2b;overflow:hidden">
  <div class="a" style="left:0;top:0;width:602px;height:30px;background:#353535"></div>
  <div class="a" style="left:0;top:0;width:120px;height:30px;background:#2b2b2b"></div>
  <div class="a" style="left:11px;top:9px;width:13px;height:13px;background:#f5c518"></div><div class="t" style="left:15px;top:15px;font-size:6px;font-weight:bold;color:#333">JS</div>
  <div class="t" style="left:32px;top:8px;font-size:13px;font-style:italic;color:#fff">app.js</div>
  <svg class="a" style="left:96px;top:8px" width="14" height="14" viewBox="0 0 14 14" stroke="#eee" stroke-width="1.4"><path d="M2.5 2.5 L11.5 11.5 M11.5 2.5 L2.5 11.5"/></svg>
  <svg class="a" style="left:530px;top:6px" width="72" height="18" viewBox="0 0 72 18" fill="none" stroke="#cfcfcf" stroke-width="1.2">
    <rect x="7.5" y="3.5" width="11" height="11"/><line x1="13" y1="3.5" x2="13" y2="14.5"/>
    <circle cx="40" cy="9" r=".9" fill="#cfcfcf"/><circle cx="45" cy="9" r=".9" fill="#cfcfcf"/><circle cx="50" cy="9" r=".9" fill="#cfcfcf"/>
  </svg>
  <svg class="a" style="left:0;top:30px" width="220" height="22" viewBox="0 0 220 22" fill="none" stroke="#9a9a9a" stroke-width="1.1">
    <path d="M9 5.5 H11 M13 5.5 H23 M9 9 H11 M13 9 H23 M9 12.5 H11 M13 12.5 H23 M9 16 H11 M13 16 H23"/>
    <path d="M40 4.5 H49 V17 L44.5 13 L40 17Z"/>
    <path d="M68 11 H81 M73 6 L68 11 L73 16"/>
    <path d="M96 11 H109 M104 6 L109 11 L104 16" stroke="#5a5a5a"/>
  </svg>
  <div class="a" style="left:127px;top:34px;width:13px;height:13px;background:#f5c518"></div><div class="t" style="left:131px;top:40px;font-size:6px;font-weight:bold;color:#333">JS</div>
  <div class="t" style="left:148px;top:34px;font-size:13px;color:#b4b4b4">app.js</div>
  <svg class="a" style="left:185px;top:34px" width="30" height="14" viewBox="0 0 30 14" fill="none" stroke="#b4b4b4" stroke-width="1.1"><path d="M2.5 2.5 L7 7 L2.5 11.5"/><circle cx="14.5" cy="11" r=".7" fill="#b4b4b4" stroke="none"/><circle cx="18" cy="11" r=".7" fill="#b4b4b4" stroke="none"/><circle cx="21.5" cy="11" r=".7" fill="#b4b4b4" stroke="none"/></svg>

  <div class="a" style="left:70px;top:124px;width:1px;height:271px;background:#404040"></div>
  <div class="a" style="left:96px;top:148px;width:1px;height:142px;background:#404040"></div>
  <div class="a" style="left:96px;top:341px;width:1px;height:54px;background:#404040"></div>
  <div class="a" style="left:123px;top:364px;width:1px;height:31px;background:#404040"></div>
  <div class="a" style="left:149px;top:386px;width:1px;height:9px;background:#404040"></div>
<div class="t" style="left:20px;top:57px;width:24px;text-align:right;font-family:'Liberation Mono',monospace;font-size:11px;line-height:14px;color:#5a5a5a">1</div>
<div class="t" style="left:70.5px;top:58px;font-family:'Liberation Mono',monospace;font-size:11px;line-height:14px;color:#d4d4d4;-webkit-text-stroke:0.3px"><span style="color:#dcd46a">var</span> <span style="color:#c8d3dc">a</span> <span style="color:#f2cf2a">=</span> <span style="color:#eea255">require</span><span style="color:#f2cf2a">(</span><span style="color:#d4d4d4">"</span><span style="color:#ec6e5c">./utils/md5.js</span><span style="color:#d4d4d4">"</span><span style="color:#f2cf2a">)</span><span style="color:#d4d4d4">, </span><span style="color:#c8d3dc">e</span> <span style="color:#f2cf2a">=</span> <span style="color:#eea255">require</span><span style="color:#f2cf2a">(</span><span style="color:#d4d4d4">"</span><span style="color:#ec6e5c">./utils/util.js</span><span style="color:#d4d4d4">"</span><span style="color:#f2cf2a">)</span><span style="color:#5cb4ea">;</span></div>
<div class="t" style="left:20px;top:81px;width:24px;text-align:right;font-family:'Liberation Mono',monospace;font-size:11px;line-height:14px;color:#5a5a5a">2</div>
<div class="t" style="left:70.5px;top:82px;font-family:'Liberation Mono',monospace;font-size:11px;line-height:14px;color:#d4d4d4;-webkit-text-stroke:0.3px"></div>
<div class="t" style="left:20px;top:105px;width:24px;text-align:right;font-family:'Liberation Mono',monospace;font-size:11px;line-height:14px;color:#5a5a5a">3</div>
<div class="t" style="left:70.5px;top:106px;font-family:'Liberation Mono',monospace;font-size:11px;line-height:14px;color:#d4d4d4;-webkit-text-stroke:0.3px"><span style="color:#eea255">App</span><span style="color:#f2cf2a">(</span><span style="color:#d26fd8">{</span></div>
<div class="t" style="left:20px;top:129px;width:24px;text-align:right;font-family:'Liberation Mono',monospace;font-size:11px;line-height:14px;color:#5a5a5a">4</div>
<div class="t" style="left:96.9px;top:130px;font-family:'Liberation Mono',monospace;font-size:11px;line-height:14px;color:#d4d4d4;-webkit-text-stroke:0.3px"><span style="color:#eea255">onLaunch</span><span style="color:#d4d4d4">: </span><span style="color:#dcd46a">function</span><span style="color:#4aa8f0">()</span> <span style="color:#4aa8f0">{</span></div>
<div class="t" style="left:20px;top:153px;width:24px;text-align:right;font-family:'Liberation Mono',monospace;font-size:11px;line-height:14px;color:#5a5a5a">5</div>
<div class="t" style="left:123.3px;top:154px;font-family:'Liberation Mono',monospace;font-size:11px;line-height:14px;color:#d4d4d4;-webkit-text-stroke:0.3px"><span style="color:#dcd46a">var</span> <span style="color:#c8d3dc">a</span> <span style="color:#f2cf2a">=</span> <span style="color:#d8d2c0">wx</span><span style="color:#5cb4ea">.</span><span style="color:#eea255">getStorageSync</span><span style="color:#f2cf2a">(</span><span style="color:#d4d4d4">"</span><span style="color:#ec6e5c">logs</span><span style="color:#d4d4d4">"</span><span style="color:#f2cf2a">)</span> <span style="color:#f2cf2a">||</span> <span style="color:#f2cf2a">[]</span><span style="color:#5cb4ea">;</span></div>
<div class="t" style="left:20px;top:177px;width:24px;text-align:right;font-family:'Liberation Mono',monospace;font-size:11px;line-height:14px;color:#5a5a5a">6</div>
<div class="t" style="left:123.3px;top:178px;font-family:'Liberation Mono',monospace;font-size:11px;line-height:14px;color:#d4d4d4;-webkit-text-stroke:0.3px"><span style="color:#c8d3dc">a</span><span style="color:#5cb4ea">.</span><span style="color:#eea255">unshift</span><span style="color:#f2cf2a">(</span><span style="color:#5cb4ea">Date</span><span style="color:#5cb4ea">.</span><span style="color:#eea255">now</span><span style="color:#d26fd8">()</span><span style="color:#f2cf2a">)</span><span style="color:#d4d4d4">, </span><span style="color:#d8d2c0">wx</span><span style="color:#5cb4ea">.</span><span style="color:#eea255">setStorageSync</span><span style="color:#f2cf2a">(</span><span style="color:#d4d4d4">"</span><span style="color:#ec6e5c">logs</span><span style="color:#d4d4d4">"</span><span style="color:#d4d4d4">, </span><span style="color:#c8d3dc">a</span><span style="color:#f2cf2a">)</span><span style="color:#5cb4ea">;</span></div>
<div class="t" style="left:20px;top:201px;width:24px;text-align:right;font-family:'Liberation Mono',monospace;font-size:11px;line-height:14px;color:#5a5a5a">7</div>
<div class="t" style="left:123.3px;top:202px;font-family:'Liberation Mono',monospace;font-size:11px;line-height:14px;color:#d4d4d4;-webkit-text-stroke:0.3px"><span style="color:#dcd46a">var</span> <span style="color:#c8d3dc">e</span> <span style="color:#f2cf2a">=</span> <span style="color:#d8d2c0">wx</span><span style="color:#5cb4ea">.</span><span style="color:#eea255">getStorageSync</span><span style="color:#f2cf2a">(</span><span style="color:#d4d4d4">"</span><span style="color:#ec6e5c">loginKey</span><span style="color:#d4d4d4">"</span><span style="color:#f2cf2a">)</span> <span style="color:#f2cf2a">||</span> <span style="color:#d4d4d4">""</span><span style="color:#d4d4d4">, </span><span style="color:#c8d3dc">o</span> <span style="color:#f2cf2a">=</span> <span style="color:#d8d2c0">wx</span><span style="color:#5cb4ea">.</span><span style="color:#eea255">getStorageSync</span></div>
<div class="t" style="left:123.3px;top:226px;font-family:'Liberation Mono',monospace;font-size:11px;line-height:14px;color:#d4d4d4;-webkit-text-stroke:0.3px"><span style="color:#f2cf2a">(</span><span style="color:#d4d4d4">"</span><span style="color:#ec6e5c">openid</span><span style="color:#d4d4d4">"</span><span style="color:#f2cf2a">)</span> <span style="color:#f2cf2a">||</span> <span style="color:#d4d4d4">""</span><span style="color:#5cb4ea">;</span></div>
<div class="t" style="left:20px;top:249px;width:24px;text-align:right;font-family:'Liberation Mono',monospace;font-size:11px;line-height:14px;color:#5a5a5a">8</div>
<div class="t" style="left:123.3px;top:250px;font-family:'Liberation Mono',monospace;font-size:11px;line-height:14px;color:#d4d4d4;-webkit-text-stroke:0.3px"><span style="color:#5cb4ea">this</span><span style="color:#5cb4ea">.</span><span style="color:#d8d2c0">globalData</span><span style="color:#5cb4ea">.</span><span style="color:#d8d2c0">loginKey</span> <span style="color:#f2cf2a">=</span> <span style="color:#c8d3dc">e</span><span style="color:#d4d4d4">, </span><span style="color:#5cb4ea">this</span><span style="color:#5cb4ea">.</span><span style="color:#d8d2c0">globalData</span><span style="color:#5cb4ea">.</span><span style="color:#d8d2c0">openid</span> <span style="color:#f2cf2a">=</span> <span style="color:#c8d3dc">o</span><span style="color:#d4d4d4">, </span><span style="color:#d8d2c0">console</span><span style="color:#5cb4ea">.</span><span style="color:#eea255">log</span></div>
<div class="t" style="left:123.3px;top:274px;font-family:'Liberation Mono',monospace;font-size:11px;line-height:14px;color:#d4d4d4;-webkit-text-stroke:0.3px"><span style="color:#f2cf2a">(</span><span style="color:#d4d4d4">"</span><span style="color:#ec6e5c">loginKey=</span><span style="color:#d4d4d4">"</span> <span style="color:#f2cf2a">+</span> <span style="color:#c8d3dc">e</span><span style="color:#f2cf2a">)</span><span style="color:#5cb4ea">;</span></div>
<div class="t" style="left:20px;top:297px;width:24px;text-align:right;font-family:'Liberation Mono',monospace;font-size:11px;line-height:14px;color:#5a5a5a">9</div>
<div class="t" style="left:96.9px;top:298px;font-family:'Liberation Mono',monospace;font-size:11px;line-height:14px;color:#d4d4d4;-webkit-text-stroke:0.3px"><span style="color:#4aa8f0">}</span><span style="color:#d4d4d4">,</span></div>
<div class="t" style="left:20px;top:321px;width:24px;text-align:right;font-family:'Liberation Mono',monospace;font-size:11px;line-height:14px;color:#5a5a5a">10</div>
<div class="t" style="left:96.9px;top:322px;font-family:'Liberation Mono',monospace;font-size:11px;line-height:14px;color:#d4d4d4;-webkit-text-stroke:0.3px"><span style="color:#eea255">claerCache</span><span style="color:#d4d4d4">: </span><span style="color:#dcd46a">function</span><span style="color:#4aa8f0">()</span> <span style="color:#4aa8f0">{</span></div>
<div class="t" style="left:20px;top:345px;width:24px;text-align:right;font-family:'Liberation Mono',monospace;font-size:11px;line-height:14px;color:#5a5a5a">11</div>
<div class="t" style="left:123.3px;top:346px;font-family:'Liberation Mono',monospace;font-size:11px;line-height:14px;color:#d4d4d4;-webkit-text-stroke:0.3px"><span style="color:#d8d2c0">wx</span><span style="color:#5cb4ea">.</span><span style="color:#eea255">getSavedFileList</span><span style="color:#f2cf2a">(</span><span style="color:#d26fd8">{</span></div>
<div class="t" style="left:20px;top:369px;width:24px;text-align:right;font-family:'Liberation Mono',monospace;font-size:11px;line-height:14px;color:#5a5a5a">12</div>
<div class="t" style="left:149.7px;top:370px;font-family:'Liberation Mono',monospace;font-size:11px;line-height:14px;color:#d4d4d4;-webkit-text-stroke:0.3px"><span style="color:#eea255">success</span><span style="color:#d4d4d4">: </span><span style="color:#dcd46a">function</span><span style="color:#4aa8f0">(</span><span style="color:#ec6e5c">a</span><span style="color:#4aa8f0">)</span> <span style="color:#4aa8f0">{</span></div>
<div class="t" style="left:176.1px;top:394px;font-family:'Liberation Mono',monospace;font-size:11px;line-height:14px;color:#d4d4d4;-webkit-text-stroke:0.3px"></div>
  <svg class="a" style="left:121px;top:68px" width="14" height="6" viewBox="0 0 14 6" fill="#b0b0b0"><circle cx="2.5" cy="3" r=".9"/><circle cx="6" cy="3" r=".9"/><circle cx="9.5" cy="3" r=".9"/></svg>
  <svg class="a" style="left:0;top:52px" width="80" height="350" viewBox="0 0 80 350" fill="none" stroke="#bbb" stroke-width="1.2"><path d="M53 55 L57.5 59 L62 55"/><path d="M53 79 L57.5 83 L62 79"/><path d="M53 271 L57.5 275 L62 271"/><path d="M53 295 L57.5 299 L62 295"/><path d="M53 319 L57.5 323 L62 319"/></svg>
  <div class="a" style="left:587px;top:52px;width:1px;height:343px;background:#3c3c3c"></div>
</div>

<!-- ===== devtools ===== -->
<div class="a" id="dt" style="left:648px;top:487px;width:602px;height:285px;background:#242424">
  <div class="a" style="left:0;top:0;width:602px;height:1px;background:#3c3c3c"></div>
  <div class="a" style="left:0;top:1px;width:602px;height:29px;background:#333"></div>
  <div class="t" style="left:20px;top:11px;font-size:11px;color:#f0f0f0;font-weight:500">调试器</div>
  <div class="a" style="left:20px;top:28px;width:33px;height:2px;background:#e0e0e0"></div>
  <div class="a" style="left:61px;top:8px;width:18px;height:18px;border-radius:50%;background:#474747"></div>
  <div class="t" style="left:61px;top:11px;width:18px;text-align:center;font-size:11.5px;color:#e8e8e8">2</div>
  <div class="t" style="left:99px;top:11px;font-size:11px;color:#9a9a9a">问题</div>
  <div class="a" style="left:128px;top:8px;width:18px;height:18px;border-radius:50%;background:#474747"></div>
  <div class="t" style="left:128px;top:11px;width:18px;text-align:center;font-size:11.5px;color:#e8e8e8">9</div>
  <div class="t" style="left:166px;top:11px;font-size:11px;color:#9a9a9a">输出</div>
  <div class="t" style="left:208px;top:11px;font-size:11px;color:#9a9a9a">终端</div>
  <svg class="a" style="left:530px;top:9px" width="72" height="16" viewBox="0 0 72 16" fill="none" stroke="#dcdcdc" stroke-width="1.3">
    <path d="M8 11 L13 6 L18 11"/><path d="M40 4 L50 14 M50 4 L40 14"/>
  </svg>
  <!-- devtools tab bar -->
  <div class="a" style="left:0;top:30px;width:602px;height:26px;background:#28292c"></div>
  <svg class="a" style="left:0;top:30px" width="40" height="26" viewBox="0 0 40 26" fill="none" stroke="#aaa" stroke-width="1.2">
    <path d="M22.5 10 V7.5 H10.5 V19.5 H14" stroke-dasharray="none"/><path d="M15.5 12 L23 15 L20 16.3 L23 19.5 L21.5 20.8 L18.5 17.5 L16.5 20Z" fill="#aaa" stroke="none"/>
    <line x1="34.5" y1="6" x2="34.5" y2="20" stroke="#444"/>
  </svg>
  <div class="a" style="left:41px;top:30px;width:54px;height:26px;background:#000"></div>
  <div class="t" style="left:53px;top:38px;font-size:12px;color:#fff">Wxml</div>
  <div class="t" style="left:107px;top:38px;font-size:12px;color:#e0e0e0">Console</div>
  <div class="t" style="left:172px;top:38px;font-size:12px;color:#e0e0e0">Sources</div>
  <div class="t" style="left:238px;top:38px;font-size:12px;color:#e0e0e0">Network</div>
  <div class="t" style="left:306px;top:38px;font-size:12px;color:#e0e0e0">Memory</div>
  <svg class="a" style="left:368px;top:36px" width="16" height="14" viewBox="0 0 16 14" fill="none" stroke="#ccc" stroke-width="1.2"><path d="M3.5 2.5 L7.5 7 L3.5 11.5 M8 2.5 L12 7 L8 11.5"/></svg>
  <svg class="a" style="left:455px;top:36px" width="150" height="16" viewBox="0 0 150 16">
    <path d="M9 2 L14.5 12.5 H3.5Z" fill="#f5b400"/><rect x="8.3" y="5.5" width="1.4" height="4" fill="#fff"/><rect x="8.3" y="10.2" width="1.4" height="1.4" fill="#fff"/>
    <path d="M30 4 H39 V11 H33 L30 13.5Z" fill="#2b7cf0"/><path d="M32 6.5 H37 M32 8.5 H35.5" stroke="#fff" stroke-width=".9"/>
    <line x1="55.5" y1="1" x2="55.5" y2="15" stroke="#444" stroke-width="1"/>
    <g transform="translate(74,7.5)" fill="#9a9a9a"><circle r="5.3"/><rect x="-1.9" y="-7.3" width="3.8" height="3.5" rx=".5" transform="rotate(0)"/><rect x="-1.9" y="-7.3" width="3.8" height="3.5" rx=".5" transform="rotate(60)"/><rect x="-1.9" y="-7.3" width="3.8" height="3.5" rx=".5" transform="rotate(120)"/><rect x="-1.9" y="-7.3" width="3.8" height="3.5" rx=".5" transform="rotate(180)"/><rect x="-1.9" y="-7.3" width="3.8" height="3.5" rx=".5" transform="rotate(240)"/><rect x="-1.9" y="-7.3" width="3.8" height="3.5" rx=".5" transform="rotate(300)"/><circle r="2.3" fill="#28292c"/></g>
    <circle cx="102" cy="3" r="1.3" fill="#9a9a9a"/><circle cx="102" cy="7.5" r="1.3" fill="#9a9a9a"/><circle cx="102" cy="12" r="1.3" fill="#9a9a9a"/>
    <path d="M125 5 H122.5 V14.5 H135.5 V12 M127.5 1.5 H138.5 V10 H127.5Z" fill="none" stroke="#8a8a8a" stroke-width="2"/>
  </svg>
  <div class="t" style="left:473px;top:38px;font-size:13px;color:#e8e8e8">2</div>
  <div class="t" style="left:498px;top:38px;font-size:13px;color:#e8e8e8">1</div>
  <!-- scroll strip -->
  <div class="a" style="left:0;top:56px;width:602px;height:6px;background:#1e1e1e"></div>
  <div class="a" style="left:0;top:56px;width:602px;height:1px;background:#3a3a3a"></div>
  <div class="a" style="left:588px;top:57px;width:12px;height:4px;border-radius:2px;background:#444"></div>
  <div class="a" style="left:0;top:62px;width:602px;height:1px;background:#3a3a3a"></div>
  <div class="a" style="left:0;top:85px;width:602px;height:1px;background:#3a3a3a"></div>
  <!-- styles bar -->
  <div class="a" style="left:0;top:86px;width:602px;height:26px;background:#28292c"></div>
  <div class="a" style="left:0;top:86px;width:50px;height:26px;background:#000"></div>
  <div class="t" style="left:10px;top:94px;font-size:12px;color:#fff">Styles</div>
  <div class="t" style="left:59px;top:94px;font-size:12px;color:#e0e0e0">Computed</div>
  <div class="t" style="left:135px;top:94px;font-size:12px;color:#e0e0e0">Dataset</div>
  <div class="t" style="left:195px;top:94px;font-size:12px;color:#e0e0e0">Component Data</div>
  <div class="t" style="left:305px;top:94px;font-size:12px;color:#e0e0e0">Scope Data</div>
  <div class="a" style="left:0;top:112px;width:602px;height:1px;background:#3a3a3a"></div>
  <div class="a" style="left:0;top:113px;width:602px;height:26px;background:#28292c"></div>
  <div class="a" style="left:3px;top:115px;width:527px;height:22px;background:#202020"></div>
  <div class="t" style="left:7px;top:121px;font-size:12px;color:#8a8a8a">Filter</div>
  <div class="t" style="left:541px;top:120px;font-size:12px;font-weight:bold;color:#e8e8e8;font-family:'Liberation Mono',monospace">.cls</div>
  <svg class="a" style="left:576px;top:115px" width="26" height="22" viewBox="0 0 26 22" fill="none" stroke="#666" stroke-width="1.3"><path d="M9 5 V15 M4 10 H14"/><path d="M22 17 L22 20 L19 20Z" fill="#666" stroke="none"/></svg>
  <div class="a" style="left:0;top:139px;width:602px;height:1px;background:#2e2e2e"></div>
</div>

<!-- ===== console drawer ===== -->
<div class="a" id="con" style="left:648px;top:772px;width:602px;height:200px;background:#242424;overflow:hidden">
  <div class="a" style="left:0;top:0;width:602px;height:1px;background:#3a3a3a"></div>
  <div class="a" style="left:0;top:1px;width:602px;height:26px;background:#28292c"></div>
  <svg class="a" style="left:10px;top:7px" width="10" height="16" viewBox="0 0 10 16" fill="#9a9a9a"><circle cx="5" cy="3" r="1.3"/><circle cx="5" cy="8" r="1.3"/><circle cx="5" cy="13" r="1.3"/></svg>
  <div class="a" style="left:28px;top:1px;width:62px;height:25px;background:#000"></div>
  <div class="t" style="left:38px;top:9px;font-size:11.6px;color:#fff">Console</div>
  <svg class="a" style="left:577px;top:6px" width="14" height="14" viewBox="0 0 14 14" stroke="#ccc" stroke-width="1.3"><path d="M2 2 L12 12 M12 2 L2 12"/></svg>
  <div class="a" style="left:0;top:27px;width:602px;height:1px;background:#3a3a3a"></div>
  <div class="a" style="left:0;top:28px;width:602px;height:26px;background:#28292c"></div>
  <svg class="a" style="left:0;top:28px" width="602" height="26" viewBox="0 0 602 26" fill="none" stroke="#9a9a9a" stroke-width="1.2">
    <rect x="8.5" y="6.5" width="14" height="13"/><line x1="12.5" y1="6.5" x2="12.5" y2="19.5"/><path d="M15 9.5 L19.5 13 L15 16.5Z" fill="#9a9a9a" stroke="none"/>
    <circle cx="44.5" cy="13" r="6" stroke-width="1.8"/><line x1="40.5" y1="9" x2="48.5" y2="17" stroke-width="1.8"/>
    <line x1="62.5" y1="5" x2="62.5" y2="21" stroke="#3e3e3e"/>
    <path d="M193 10 H201 L197 16Z" fill="#9a9a9a" stroke="none"/>
    <line x1="209.5" y1="5" x2="209.5" y2="21" stroke="#3e3e3e"/>
    <path d="M219 13 C222 8 232 8 235 13 C232 18 222 18 219 13Z" fill="#9a9a9a" stroke="none"/><circle cx="227" cy="13" r="2.6" fill="#28292c" stroke="none"/><circle cx="227" cy="13" r="1.4" fill="#9a9a9a" stroke="none"/>
    <line x1="246.5" y1="5" x2="246.5" y2="21" stroke="#3e3e3e"/>
    <path d="M465 10 H473 L469 16Z" fill="#9a9a9a" stroke="none"/>
    <line x1="509.5" y1="5" x2="509.5" y2="21" stroke="#3e3e3e"/>
  </svg>
  <div class="t" style="left:72px;top:36px;font-size:12px;color:#e8e8e8">appservice (#5)</div>
  <div class="a" style="left:253px;top:31px;width:128px;height:20px;border:1px solid #4a4a4a;background:#1e1e1e"></div>
  <div class="t" style="left:258px;top:37px;font-size:12px;color:#e0e0e0">Filter</div>
  <div class="t" style="left:389px;top:36px;font-size:11.7px;color:#e8e8e8">Default levels</div>
  <div class="t" style="left:519px;top:36px;font-size:12px;color:#9a9a9a">3 hidden</div>
  <svg class="a" style="left:577px;top:34px" width="16" height="16" viewBox="-8 -8 16 16" fill="#9a9a9a"><circle r="5.5"/><rect x="-2" y="-7.6" width="4" height="3.6" rx=".5" transform="rotate(0)"/><rect x="-2" y="-7.6" width="4" height="3.6" rx=".5" transform="rotate(60)"/><rect x="-2" y="-7.6" width="4" height="3.6" rx=".5" transform="rotate(120)"/><rect x="-2" y="-7.6" width="4" height="3.6" rx=".5" transform="rotate(180)"/><rect x="-2" y="-7.6" width="4" height="3.6" rx=".5" transform="rotate(240)"/><rect x="-2" y="-7.6" width="4" height="3.6" rx=".5" transform="rotate(300)"/><circle r="2.4" fill="#28292c"/></svg>
  <div class="a" style="left:0;top:54px;width:602px;height:108px;background:#332b00"></div>
  <div class="a" style="left:0;top:54px;width:602px;height:1px;background:#3e3e3e"></div>
  <div class="a" style="left:0;top:161px;width:588px;height:1px;background:#6b5800"></div>
<div class="a" style="left:0;top:54px;width:588px;height:107px;overflow:hidden"><div class="t" style="left:24px;top:-4px;font-family:'Liberation Mono',monospace;font-size:11px;line-height:14px;color:#f2f2f2;white-space:pre;-webkit-text-stroke:0.3px">{{item.way}}" style="{{onChangedWay==idx? 'background-color: rgba(250, 250, 250,</div><div class="t" style="left:24px;top:10px;font-family:'Liberation Mono',monospace;font-size:11px;line-height:14px;color:#f2f2f2;white-space:pre;-webkit-text-stroke:0.3px">0.4);':''}}margin:15rpx;width:148rpx;padding:0" wx:for="{{waylist}}" wx:for-</div><div class="t" style="left:24px;top:24px;font-family:'Liberation Mono',monospace;font-size:11px;line-height:14px;color:#f2f2f2;white-space:pre;-webkit-text-stroke:0.3px">index="idx"&gt;</div><div class="t" style="left:24px;top:38px;font-family:'Liberation Mono',monospace;font-size:11px;line-height:14px;color:#f2f2f2;white-space:pre;-webkit-text-stroke:0.3px">     |          ^</div><div class="t" style="left:24px;top:52px;font-family:'Liberation Mono',monospace;font-size:11px;line-height:14px;color:#f2f2f2;white-space:pre;-webkit-text-stroke:0.3px">   9 |             &lt;image class="meunavatarv1" mode="aspectFit" src="</div><div class="t" style="left:24px;top:66px;font-family:'Liberation Mono',monospace;font-size:11px;line-height:14px;color:#f2f2f2;white-space:pre;-webkit-text-stroke:0.3px">{{item.logo}}"&gt;&lt;/image&gt;</div><div class="t" style="left:24px;top:80px;font-family:'Liberation Mono',monospace;font-size:11px;line-height:14px;color:#f2f2f2;white-space:pre;-webkit-text-stroke:0.3px">  10 |             &lt;text class="menunamev1"&gt;{{item.name}}&lt;/text&gt;</div><div class="t" style="left:24px;top:94px;font-family:'Liberation Mono',monospace;font-size:11px;line-height:14px;color:#f2f2f2;white-space:pre;-webkit-text-stroke:0.3px">  11 |         &lt;/button&gt;</div></div>
  <svg class="a" style="left:8px;top:167px" width="10" height="12" viewBox="0 0 10 12" fill="none" stroke="#3d8ef0" stroke-width="1.5"><path d="M3 2.5 L6.5 6 L3 9.5"/></svg>
  <div class="a" style="left:587px;top:54px;width:15px;height:146px;background:#2a2a2a"></div>
  <div class="a" style="left:588px;top:176px;width:12px;height:24px;border:1px solid #444;background:#383838"></div>
</div>

<!-- ===== status bar ===== -->
<div class="a" id="status" style="left:0;top:972px;width:1250px;height:28px;background:#373737">
  <div class="t" style="left:8px;top:8px;font-size:12px;color:#c8c8c8">页面路径</div>
  <div class="a" style="left:61px;top:13px;width:0;height:0;border-left:3.5px solid transparent;border-right:3.5px solid transparent;border-top:4px solid #aaa"></div>
  <div class="a" style="left:75px;top:8px;width:1px;height:12px;background:#555"></div>
  <div class="t" style="left:83px;top:9px;font-size:12.3px;color:#c0c0c0">pages/index/index</div>
  <svg class="a" style="left:186px;top:6px" width="16" height="16" viewBox="0 0 16 16" fill="none" stroke="#bbb" stroke-width="1.1"><path d="M5.5 5.5 H13.5 V14.5 H5.5Z M3.5 12 V3.5 H11"/></svg>
  <svg class="a" style="left:388px;top:6px" width="22" height="16" viewBox="0 0 22 16" fill="none" stroke="#aaa" stroke-width="1.2"><path d="M3 8 C6 3 16 3 19 8 C16 13 6 13 3 8Z"/><circle cx="11" cy="8" r="2.6"/></svg>
  <svg class="a" style="left:422px;top:6px" width="20" height="16" viewBox="0 0 20 16" fill="#aaa"><circle cx="4" cy="8.5" r="1.1"/><circle cx="9.5" cy="8.5" r="1.1"/><circle cx="15" cy="8.5" r="1.1"/></svg>
  <div class="a" style="left:447px;top:0;width:1px;height:28px;background:#222"></div>
  <svg class="a" style="left:460px;top:7px" width="60" height="16" viewBox="0 0 60 16" fill="none" stroke="#aaa" stroke-width="1.1">
    <circle cx="9.5" cy="8" r="6"/><path d="M7 5.5 L12 10.5 M12 5.5 L7 10.5"/>
    <path d="M37 2.5 L43.5 14 H30.5Z M37 6.5 V10.5 M37 11.8 V12.6"/>
  </svg>
  <div class="t" style="left:481px;top:9px;font-size:12.5px;color:#aaa">3</div>
  <div class="t" style="left:508px;top:9px;font-size:12.5px;color:#aaa">6</div>
  <div class="t" style="left:989px;top:9px;font-size:11.5px;color:#aaa">行 1，列 1</div>
  <div class="t" style="left:1062px;top:9px;font-size:11.5px;color:#aaa">空格: 4</div>
  <div class="t" style="left:1114px;top:9px;font-size:11.5px;color:#aaa">UTF-8</div>
  <div class="t" style="left:1162px;top:9px;font-size:11.5px;color:#aaa">LF</div>
  <div class="t" style="left:1189px;top:9px;font-size:11.2px;color:#aaa">JavaScript</div>
</div>

</div>
</body></html>
